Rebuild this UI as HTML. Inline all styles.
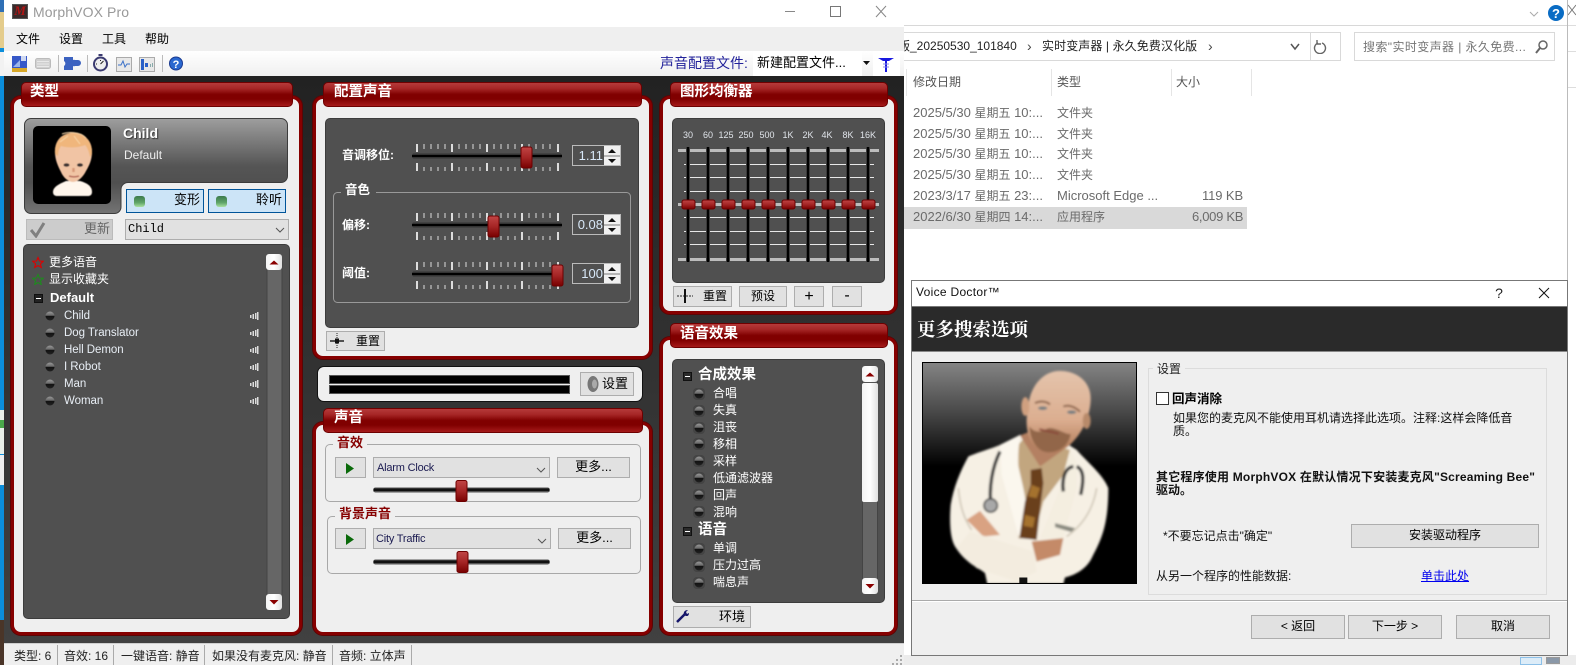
<!DOCTYPE html>
<html><head><meta charset="utf-8"><title>MorphVOX Pro</title>
<style>
html,body{margin:0;padding:0}
body{width:1576px;height:665px;overflow:hidden;position:relative;background:#fff;font:12px/16px "Liberation Sans","WenQuanYi Zen Hei","Noto Sans CJK SC",sans-serif;color:#000}
.a{position:absolute}
.t{position:absolute;white-space:nowrap;line-height:16px;font-size:12px}
.w{color:#fff}
.p{position:absolute;box-sizing:border-box;background:#efefef;border:3px solid #860000;border-radius:10px;box-shadow:0 0 0 1px #5a0505}
.h{position:absolute;box-sizing:border-box;height:25px;border:1px solid #6e0000;border-radius:5px;background:linear-gradient(#b53a3a 0,#a52525 25%,#800000 50%,#800000 70%,#a51a1a 100%);color:#fff;font-weight:bold;font-size:14.5px;line-height:16px;padding-top:0}
.h span{position:absolute;top:1px}
.d{position:absolute;box-sizing:border-box;background:#505050;border:1px solid #3c3c3c;border-radius:5px}
.b{position:absolute;box-sizing:border-box;background:#e1e1e1;border:1px solid #adadad;text-align:center;line-height:19px;white-space:nowrap}
.g{position:absolute;box-sizing:border-box;border:1px solid #a8a8a8;border-radius:5px}
.r{color:#6b6b6b;font-size:13px}
.r i{font-style:normal;font-size:12px}
.n{font-size:11.5px;letter-spacing:-.05px;color:#e8eef5}
</style></head><body>

<!-- desktop strip -->
<div class="a" style="left:0;top:0;width:4px;height:665px;background:#0b8edb"></div>
<div class="a" style="left:0;top:0;width:4px;height:30px;background:#2f6fb5"></div>
<div class="a" style="left:0;top:12px;width:4px;height:36px;background:#e4cc8c"></div>
<div class="a" style="left:0;top:52px;width:4px;height:24px;background:#f2f2f2"></div>
<div class="a" style="left:0;top:410px;width:4px;height:44px;background:#e8efe8"></div>
<div class="a" style="left:0;top:420px;width:4px;height:8px;background:#4aa84a"></div>
<div class="a" style="left:0;top:455px;width:4px;height:30px;background:#eee"></div>
<div class="a" style="left:0;top:620px;width:4px;height:45px;background:#4a3528"></div>

<!-- explorer window -->
<div class="a" style="left:904px;top:0;width:663px;height:665px;background:#fff"></div>
<div class="a" style="left:904px;top:25px;width:663px;height:1px;background:#d8d8d8"></div>
<div class="a" style="left:904px;top:32px;width:437px;height:29px;box-sizing:border-box;border:1px solid #d9d9d9;border-left:0"></div>
<div class="a" style="left:1310px;top:32px;width:1px;height:29px;background:#d9d9d9"></div>
<div class="a" style="left:1354px;top:32px;width:201px;height:29px;box-sizing:border-box;border:1px solid #d9d9d9"></div>
<div class="t" style="left:898px;top:38px;font-size:12px;color:#222">版_20250530_101840</div>
<div class="t" style="left:1027px;top:38px;color:#444;font-size:14px">›</div>
<div class="t" style="left:1042px;top:38px;color:#222;letter-spacing:.1px">实时变声器 | 永久免费汉化版</div>
<div class="t" style="left:1208px;top:38px;color:#444;font-size:14px">›</div>
<svg class="a" style="left:1290px;top:40px" width="40" height="14"><path d="M1 4l4 5 4-5" fill="none" stroke="#555" stroke-width="1.5"/><path d="M28 3a5.5 5.5 0 1 0 4 0M27 0v4h4" fill="none" stroke="#666" stroke-width="1.4"/></svg>
<div class="t" style="left:1363px;top:39px;color:#777;letter-spacing:.4px">搜索"实时变声器 | 永久免费...</div>
<svg class="a" style="left:1534px;top:39px" width="15" height="15"><circle cx="9" cy="6" r="4" fill="none" stroke="#666" stroke-width="1.5"/><path d="M6 9l-4 5" stroke="#666" stroke-width="2"/></svg>
<svg class="a" style="left:1528px;top:2px" width="48" height="22"><path d="M2 10l4 4 4-4" fill="none" stroke="#aaa" stroke-width="1"/><circle cx="28" cy="11" r="8" fill="#0a6cc4"/><text x="28" y="16" font-size="13" font-weight="bold" fill="#fff" text-anchor="middle" font-family="Liberation Sans">?</text><path d="M40 3l8 10M48 3l-8 10" stroke="#777"/></svg>
<div class="a" style="left:906px;top:69px;width:1px;height:27px;background:#e5e5e5"></div>
<div class="a" style="left:1051px;top:69px;width:1px;height:27px;background:#e5e5e5"></div>
<div class="a" style="left:1171px;top:69px;width:1px;height:27px;background:#e5e5e5"></div>
<div class="a" style="left:1251px;top:69px;width:1px;height:27px;background:#e5e5e5"></div>
<div class="t" style="left:913px;top:74px;color:#555">修改日期</div>
<div class="t" style="left:1057px;top:74px;color:#555">类型</div>
<div class="t" style="left:1176px;top:74px;color:#555">大小</div>
<div class="a" style="left:904px;top:207px;width:343px;height:22px;background:#d9d9d9"></div>
<div class="t r" style="left:913px;top:105px">2025/5/30 <i>星期五</i> 10:...</div>
<div class="t r" style="left:913px;top:126px">2025/5/30 <i>星期五</i> 10:...</div>
<div class="t r" style="left:913px;top:146px">2025/5/30 <i>星期五</i> 10:...</div>
<div class="t r" style="left:913px;top:167px">2025/5/30 <i>星期五</i> 10:...</div>
<div class="t r" style="left:913px;top:188px">2023/3/17 <i>星期五</i> 23:...</div>
<div class="t r" style="left:913px;top:209px">2022/6/30 <i>星期四</i> 14:...</div>
<div class="t r" style="left:1057px;top:105px"><i>文件夹</i></div>
<div class="t r" style="left:1057px;top:126px"><i>文件夹</i></div>
<div class="t r" style="left:1057px;top:146px"><i>文件夹</i></div>
<div class="t r" style="left:1057px;top:167px"><i>文件夹</i></div>
<div class="t r" style="left:1057px;top:188px">Microsoft Edge ...</div>
<div class="t r" style="left:1057px;top:209px"><i>应用程序</i></div>
<div class="t r" style="left:1202px;top:188px;letter-spacing:-.1px">119 KB</div>
<div class="t r" style="left:1192px;top:209px;letter-spacing:-.3px">6,009 KB</div>
<div class="a" style="left:1567px;top:0;width:1px;height:280px;background:#bbb"></div>
<div class="a" style="left:1568px;top:25px;width:8px;height:1px;background:#ddd"></div>
<div class="a" style="left:1568px;top:51px;width:8px;height:1px;background:#ddd"></div>
<div class="a" style="left:1568px;top:87px;width:8px;height:1px;background:#ddd"></div>
<div class="a" style="left:904px;top:655px;width:672px;height:10px;background:#ececec"></div>
<div class="a" style="left:1520px;top:657px;width:22px;height:8px;box-sizing:border-box;border:1px solid #8cc0e8;background:#dcecf8"></div>
<div class="a" style="left:1546px;top:657px;width:14px;height:7px;background:#8a98a8;border:1px solid #999;box-sizing:border-box"></div>

<!-- Voice Doctor dialog -->
<div class="a" style="left:911px;top:280px;width:657px;height:376px;box-sizing:border-box;background:#efefef;border:1px solid #777"></div>
<div class="a" style="left:912px;top:281px;width:655px;height:25px;background:#fff"></div>
<div class="t" style="left:916px;top:284px;font-size:12px;letter-spacing:.3px;color:#111">Voice Doctor™</div>
<div class="a" style="left:912px;top:306px;width:655px;height:46px;box-sizing:border-box;background:#2a2a2a;border-top:1px solid #777;border-bottom:1px solid #888"></div>
<div class="t" style="left:917px;top:319px;font:bold 18.5px/20px 'Noto Serif CJK SC','Liberation Serif',serif;color:#fff">更多搜索选项</div>
<svg class="a" style="left:1490px;top:284px" width="64" height="18"><text x="9" y="14" font-size="14" text-anchor="middle" font-family="Liberation Sans" fill="#222">?</text><path d="M49 4l10 10M59 4L49 14" stroke="#111" stroke-width="1"/></svg>

<!-- doctor picture -->
<svg class="a" style="left:922px;top:362px;outline:1px solid #000;outline-offset:-1px" width="215" height="222" viewBox="66 262 645 665">
<defs>
<linearGradient id="dbg" x1="0" y1="0" x2="0" y2="1"><stop offset="0" stop-color="#858585"/><stop offset=".22" stop-color="#4a4a4a"/><stop offset=".47" stop-color="#000"/><stop offset="1" stop-color="#000"/></linearGradient>
<linearGradient id="skin" x1="0" y1="0" x2="0" y2="1"><stop offset="0" stop-color="#e4c4ac"/><stop offset=".6" stop-color="#dcae90"/><stop offset="1" stop-color="#b07a58"/></linearGradient>
<filter id="bl"><feGaussianBlur stdDeviation="3.5"/></filter>
<filter id="bl2"><feGaussianBlur stdDeviation="7"/></filter>
</defs>
<rect x="66" y="262" width="645" height="665" fill="url(#dbg)"/>
<g filter="url(#bl)">
<path d="M360 480C320 510 250 525 205 545 180 590 160 640 152 690 148 740 150 790 165 815 200 870 240 880 255 895L262 927H490L495 908C530 900 560 880 575 850 600 800 625 760 625 640 610 600 560 560 530 525L490 500Z" fill="#f6f0e4"/>
<path d="M355 510L372 490 510 525 490 600 430 680 400 795 355 790Z" fill="#c2a67f"/>
<path d="M360 480L300 510 305 600 358 790 400 800 370 640 352 560Z" fill="#fbf7ee"/>
<path d="M510 525L480 640 420 790 490 790 530 640 530 560Z" fill="#f4eee0"/>
<path d="M392 585L425 580 430 625 422 690 410 795 358 790 375 680 392 630Z" fill="#6a3f1e"/>
<path d="M395 630l25 10-10 30-25-5zM375 720l30 8-6 30-28-5z" fill="#a5722f"/>
<path d="M360 482L420 575 490 525 450 505 390 470Z" fill="#b48062"/>
<path d="M480 288C530 288 572 320 572 370 572 420 550 470 515 505 490 535 440 540 410 520 385 500 372 450 385 400 385 350 420 288 480 288Z" fill="url(#skin)"/>
<ellipse cx="376" cy="395" rx="12" ry="28" fill="#d0a080"/>
<ellipse cx="560" cy="438" rx="12" ry="24" fill="#b88a6a"/>
<path d="M388 455C400 468 412 478 440 462 462 452 490 478 512 478 505 518 470 535 440 532 412 528 390 495 388 455Z" fill="#92664a"/>
<path d="M418 463c20 6 40 8 58 14" stroke="#8a4a3a" stroke-width="6" fill="none"/>
<path d="M405 385c15-8 35-6 45 4M490 395c15-6 35 0 50 16" stroke="#8a6248" stroke-width="6" fill="none"/>
<ellipse cx="428" cy="400" rx="14" ry="5" fill="#707c80"/><ellipse cx="515" cy="412" rx="14" ry="5" fill="#707c80"/>
<path d="M300 530C275 580 268 640 272 680M530 575c22 10 22 40 12 85M490 650c-4-30 0-70 30-75" stroke="#333" stroke-width="10" fill="none"/>
<circle cx="272" cy="692" r="20" fill="#a8a8a8" stroke="#444" stroke-width="5"/>
<path d="M200 735L240 708 300 780 250 785Z" fill="#d9a282"/>
<path d="M395 800L490 790 480 840 410 860Z" fill="#c48a68"/>
<path d="M210 770l190 60 10 60-60 30-120-40-60-60Z" fill="#f3ecdf"/>
<path d="M465 745l60 15-10 12-50-15z" fill="#8a8a80"/>
<path d="M175 640c5 50 15 90 40 125M590 640c-10 60-40 110-90 145" stroke="#d0c8b8" stroke-width="5" fill="none"/>
</g>
<rect x="358" y="908" width="24" height="20" fill="#111"/>
</svg>

<!-- settings group -->
<div class="a" style="left:1148px;top:368px;width:399px;height:227px;box-sizing:border-box;border:1px solid #dcdcdc"></div>
<div class="t" style="left:1153px;top:361px;padding:0 4px;background:#efefef;color:#222">设置</div>
<div class="a" style="left:1156px;top:392px;width:13px;height:13px;box-sizing:border-box;border:1px solid #333;background:#fff"></div>
<div class="t" style="left:1172px;top:391px;font-weight:bold;font-size:12.5px">回声消除</div>
<div class="t" style="left:1173px;top:410px;color:#111">如果您的麦克风不能使用耳机请选择此选项。注释:这样会降低音</div>
<div class="t" style="left:1173px;top:423px;color:#111">质。</div>
<div class="t" style="left:1156px;top:469px;font-weight:bold;color:#111;letter-spacing:.2px">其它程序使用 MorphVOX 在默认情况下安装麦克风"Screaming Bee"</div>
<div class="t" style="left:1156px;top:482px;font-weight:bold;color:#111">驱动。</div>
<div class="t" style="left:1163px;top:528px;color:#111">*不要忘记点击"确定"</div>
<div class="b" style="left:1351px;top:524px;width:188px;height:24px;line-height:21px">安装驱动程序</div>
<div class="t" style="left:1156px;top:576px;margin-top:-8px;color:#111">从另一个程序的性能数据:</div>
<div class="t" style="left:1421px;top:568px;color:#00e;text-decoration:underline">单击此处</div>
<div class="a" style="left:912px;top:600px;width:655px;height:1px;background:#aaa"></div>
<div class="a" style="left:912px;top:601px;width:655px;height:1px;background:#fff"></div>
<div class="b" style="left:1251px;top:615px;width:94px;height:24px;line-height:21px">&lt; 返回</div>
<div class="b" style="left:1348px;top:615px;width:94px;height:24px;line-height:21px">下一步 &gt;</div>
<div class="b" style="left:1456px;top:615px;width:94px;height:24px;line-height:21px">取消</div>

<!-- MorphVOX window -->
<div class="a" style="left:4px;top:0;width:900px;height:665px;background:#efefef"></div>
<div class="a" style="left:4px;top:0;width:900px;height:27px;background:#fff"></div>
<div class="a" style="left:12px;top:4px;width:16px;height:15px;background:#3a2a2a;border:1px solid #555;box-sizing:border-box"></div>
<div class="t" style="left:13px;top:3px;width:14px;text-align:center;font:italic bold 13px/16px 'Liberation Serif',serif;color:#b01515">M</div>
<div class="t" style="left:33px;top:4px;font-size:14px;color:#999;letter-spacing:.1px">MorphVOX Pro</div>
<svg class="a" style="left:780px;top:2px" width="120" height="20"><path d="M5 9.5h10" stroke="#888"/><rect x="50.5" y="4.5" width="10" height="10" fill="none" stroke="#777"/><path d="M96 4l10 11M106 4L96 15" stroke="#888"/></svg>
<div class="t" style="left:16px;top:31px">文件</div>
<div class="t" style="left:59px;top:31px">设置</div>
<div class="t" style="left:102px;top:31px">工具</div>
<div class="t" style="left:145px;top:31px">帮助</div>
<div class="a" style="left:4px;top:51px;width:900px;height:25px;background:linear-gradient(#fff,#f0f0f0)"></div>
<svg class="a" style="left:4px;top:51px" width="190" height="25">
<rect x="8" y="5" width="15" height="12" fill="#3658c8"/><rect x="17" y="5" width="5" height="5" fill="#cfd8f0"/><path d="M9 16l7-7v7z" fill="#9bb5ea"/><rect x="8" y="17" width="15" height="4" fill="#d8a828"/>
<rect x="31.500" y="7.500" width="15" height="10" rx="2" fill="#d0d0d0" stroke="#bbb"/><path d="M33 10.500h12M33 13h12M33 15.500h12" stroke="#e8e8e8"/>
<rect x="54" y="4" width="1" height="17" fill="#bbb"/>
<path d="M60 6h9v3a2 2 0 0 1 2 0h3a3 3 0 0 1 0 6h-3a2 2 0 0 1-2 0v4H60v-4a3 3 0 0 0 0-5z" fill="#3c62c0"/>
<rect x="83" y="4" width="1" height="17" fill="#bbb"/>
<circle cx="96.500" cy="13" r="6.500" fill="#eee" stroke="#3a3a70" stroke-width="2"/><rect x="94.500" y="3" width="4" height="2" fill="#3a3a70"/><path d="M96.500 13l3-3M96.500 9v1M92 13h1" stroke="#222"/>
<rect x="112.500" y="6.500" width="15" height="14" fill="#e8e8e8" stroke="#aaa"/><path d="M114 14l3 0 2-4 2 6 2-3h3" fill="none" stroke="#3a70c8"/>
<rect x="135.500" y="6.500" width="15" height="14" fill="#e8e8e8" stroke="#aaa"/><path d="M137 8h3v11h-3zM141 12h3v4h-3z" fill="#2a60c8"/><path d="M146 13h1v3h-1zM148 12h1v4h-1z" fill="#8aa"/>
<rect x="158" y="4" width="1" height="17" fill="#bbb"/>
<circle cx="172" cy="12.500" r="6.500" fill="#2a68d0" stroke="#1a3a90"/><text x="172" y="17" font-size="11" font-weight="bold" fill="#fff" text-anchor="middle" font-family="Liberation Sans">?</text>
</svg>
<div class="t" style="left:660px;top:55px;font-size:14px;color:#22229a">声音配置文件:</div>
<div class="a" style="left:753px;top:51px;width:109px;height:25px;background:#fff"></div>
<div class="t" style="left:757px;top:55px;font-size:13px">新建配置文件...</div>
<div class="a" style="left:873px;top:51px;width:27px;height:25px;background:#fff"></div>
<svg class="a" style="left:862px;top:56px" width="36" height="16"><path d="M1 5h7l-3.500 4z" fill="#111"/><path d="M16 2h16l-5 3h-2v11h-2V5h-2z" fill="#1818e0"/><path d="M21 8h6M21 11h6" stroke="#8888e8"/></svg>

<div class="a" style="left:4px;top:76px;width:900px;height:567px;background:linear-gradient(#222,#414141)"></div>
<div class="a" style="left:4px;top:643px;width:900px;height:1px;background:#cfcfcf"></div>

<!-- panels -->
<div class="p" style="left:11px;top:96px;width:291px;height:539px"></div>
<div class="h" style="left:21px;top:82px;width:272px"><span style="left:8px">类型</span></div>
<div class="p" style="left:313px;top:96px;width:339px;height:263px"></div>
<div class="h" style="left:323px;top:82px;width:319px"><span style="left:10px">配置声音</span></div>
<div class="p" style="left:660px;top:96px;width:237px;height:218px"></div>
<div class="h" style="left:670px;top:82px;width:218px"><span style="left:9px">图形均衡器</span></div>
<div class="a" style="left:317px;top:366px;width:326px;height:36px;box-sizing:border-box;background:#efefef;border:1px solid #111;border-radius:7px"></div>
<div class="p" style="left:313px;top:422px;width:339px;height:213px"></div>
<div class="h" style="left:323px;top:408px;width:320px"><span style="left:10px">声音</span></div>
<div class="p" style="left:660px;top:337px;width:237px;height:298px"></div>
<div class="h" style="left:670px;top:323px;width:218px"><span style="left:9px;top:2px">语音效果</span></div>

<!-- dark panes -->
<div class="d" style="left:23px;top:244px;width:267px;height:375px"></div>
<div class="d" style="left:325px;top:118px;width:314px;height:210px"></div>
<div class="d" style="left:672px;top:118px;width:213px;height:165px"></div>
<div class="d" style="left:672px;top:359px;width:213px;height:244px"></div>

<!-- profile box -->
<svg class="a" style="left:0;top:0" width="310" height="260">
<defs><linearGradient id="pg" x1="0" y1="0" x2="0" y2="1"><stop offset="0" stop-color="#9e9e9e"/><stop offset=".5" stop-color="#555"/><stop offset=".68" stop-color="#505050"/><stop offset="1" stop-color="#747474"/></linearGradient>
<filter id="cb"><feGaussianBlur stdDeviation=".6"/></filter></defs>
<path d="M31 118.500H281a6.500 6.500 0 0 1 6.500 6.500V176a6.500 6.500 0 0 1-6.500 6.500H128a7 7 0 0 0-7 7V207a6.500 6.500 0 0 1-6.500 6.500H31a6.500 6.500 0 0 1-6.500-6.500V125a6.500 6.500 0 0 1 6.500-6.500z" fill="url(#pg)" stroke="#3c3c3c"/>
<rect x="33" y="126" width="78" height="78" rx="5" fill="#000"/>
<g filter="url(#cb)">
<path d="M53 192c0-5 6-8 13-11h14c7 2 12 5 12 11 0 3-2 4-4 4H57c-2 0-4-1-4-4z" fill="#fff6ec"/>
<path d="M55 152c0-13 8-19 18-19s19 6 19 19c0 8-3 14-6 19-3 6-8 11-13 11s-10-5-12-10c-3-6-6-12-6-20z" fill="#f1c4a4"/>
<path d="M55 154c-1-14 8-21 18-21s20 7 19 21l-2 3c-1-6-3-10-5-12-7 3-18 3-24 1-2 3-3 6-3 10z" fill="#f0b67c"/>
<path d="M62 134c5-2 18-3 24 4M60 142l8-6M74 136l6 8" stroke="#f8d6a8" fill="none"/>
<ellipse cx="66.500" cy="165" rx="3" ry="1.800" fill="#3a3030"/><ellipse cx="80" cy="165" rx="3" ry="1.800" fill="#3a3030"/>
<path d="M69 176c3 1 7 1 10 0" stroke="#b86a5a" stroke-width="1.500" fill="none"/><path d="M73.500 168v4" stroke="#d89878" stroke-width="2.500"/>
</g>
</svg>
<div class="t w" style="left:123px;top:125px;font-weight:bold;font-size:14px;text-shadow:1px 1px 1px #333">Child</div>
<div class="t w" style="left:124px;top:147px;font-size:12px;color:#eee">Default</div>
<div class="a" style="left:126px;top:189px;width:78px;height:24px;box-sizing:border-box;background:#cce4f7;border:1px solid #005499"></div>
<div class="a" style="left:208px;top:189px;width:78px;height:24px;box-sizing:border-box;background:#cce4f7;border:1px solid #005499"></div>
<div class="a" style="left:134px;top:196px;width:11px;height:11px;border-radius:3px;background:linear-gradient(#3c7a4c,#5fa468 60%,#a8e0a0)"></div>
<div class="a" style="left:216px;top:196px;width:11px;height:11px;border-radius:3px;background:linear-gradient(#3c7a4c,#5fa468 60%,#a8e0a0)"></div>
<div class="t" style="left:174px;top:192px;font-size:13px">变形</div>
<div class="t" style="left:256px;top:192px;font-size:13px">聆听</div>
<div class="b" style="left:26px;top:219px;width:87px;height:21px;background:#ccc;border-color:#bbb"></div>
<svg class="a" style="left:30px;top:221px" width="16" height="17"><path d="M1 9l5 6L14 2" fill="none" stroke="#808080" stroke-width="3"/></svg>
<div class="t" style="left:84px;top:221px;color:#666;font-size:13px">更新</div>
<div class="b" style="left:125px;top:219px;width:164px;height:21px;background:#e1e1e1"></div>
<div class="t" style="left:128px;top:221px;font:12px/16px 'Liberation Mono',monospace">Child</div>

<!-- type list text -->
<svg class="a" style="left:32px;top:256px" width="12" height="29"><path d="M6 1.500l1.500 3.500 3.800.3-2.900 2.500.9 3.700L6 9.500l-3.300 2 .9-3.700L.7 5.300l3.800-.3z" fill="none" stroke="#d00" stroke-width="1.100"/><path d="M6 18.500l1.500 3.500 3.800.3-2.900 2.500.9 3.700L6 26.500l-3.300 2 .9-3.700L.7 22.300l3.800-.3z" fill="none" stroke="#1f8a1f" stroke-width="1.100"/></svg>
<div class="t w" style="left:49px;top:254px">更多语音</div>
<div class="t w" style="left:49px;top:271px">显示收藏夹</div>
<div class="a" style="left:34px;top:294px;width:9px;height:9px;box-sizing:border-box;background:#222;border:1px solid #111"></div>
<div class="a" style="left:36px;top:298px;width:5px;height:1px;background:#fff"></div>
<div class="t w" style="left:50px;top:290px;font-weight:bold;font-size:13px">Default</div>
<div class="t n" style="left:64px;top:308px">Child</div>
<div class="t n" style="left:64px;top:325px">Dog Translator</div>
<div class="t n" style="left:64px;top:342px">Hell Demon</div>
<div class="t n" style="left:64px;top:359px">I Robot</div>
<div class="t n" style="left:64px;top:376px">Man</div>
<div class="t n" style="left:64px;top:393px">Woman</div>

<!-- graphics overlay -->
<svg class="a" style="left:0;top:0" width="904" height="665">
<defs>
<linearGradient id="th" x1="0" y1="0" x2="0" y2="1"><stop offset="0" stop-color="#c04545"/><stop offset=".5" stop-color="#a52525"/><stop offset="1" stop-color="#780000"/></linearGradient>
<linearGradient id="ld" x1="0" y1="0" x2="0" y2="1"><stop offset="0" stop-color="#999"/><stop offset=".45" stop-color="#666"/><stop offset=".5" stop-color="#111"/><stop offset="1" stop-color="#222"/></linearGradient>
<linearGradient id="sb" x1="0" y1="0" x2="1" y2="0"><stop offset="0" stop-color="#f4f4f4"/><stop offset=".5" stop-color="#fff"/><stop offset="1" stop-color="#e0e0e0"/></linearGradient>
<g id="tk" stroke="#dcdcdc" fill="none">
<path stroke-width="2" d="M0-12v8M35-12v8M70-12v8M105-12v8M141-12v8M0 7v8M35 7v8M70 7v8M105 7v8M141 7v8"/>
<path stroke-width="1" d="M7-12v5M14-12v5M21-12v5M28-12v5M42-12v5M49-12v5M56-12v5M63-12v5M77-12v5M84-12v5M91-12v5M98-12v5M112-12v5M119-12v5M126-12v5M133-12v5M7 11v4M14 11v4M21 11v4M28 11v4M42 11v4M49 11v4M56 11v4M63 11v4M77 11v4M84 11v4M91 11v4M98 11v4M112 11v4M119 11v4M126 11v4M133 11v4"/>
</g>
<g id="led"><circle r="4.500" fill="url(#ld)"/></g>
<g id="led2"><rect x="-6" y="-6" width="12" height="12" rx="4" fill="#444"/><circle r="4.500" fill="url(#ld)"/></g>
<g id="bar" fill="#ddd"><rect x="0" y="-1" width="1.500" height="3"/><rect x="2.500" y="-2" width="1.500" height="5"/><rect x="5" y="-3" width="1.500" height="6" /><rect x="7" y="-4" width="1.500" height="8"/></g>
<g id="th1"><rect x="-5.500" y="-10.500" width="11" height="21" rx="2" fill="url(#th)" stroke="#6e0000"/></g>
<g id="eqt"><rect x="-6.500" y="-4.500" width="13" height="9" rx="2" fill="url(#th)" stroke="#6e0000"/></g>
<g id="up"><rect width="16" height="16" rx="3" fill="url(#sb)"/><path d="M3.500 10.500h9L8 6.500z" fill="#8a0000"/></g>
<g id="dn"><rect width="16" height="16" rx="3" fill="url(#sb)"/><path d="M3.500 6h9L8 10.500z" fill="#8a0000"/></g>
<g id="spn"><rect x="0" y="0" width="16" height="19" fill="#f0f0f0"/><rect x="0" y="9" width="16" height="2" fill="#b5b5b5"/><path d="M4 7h8L8 3zM4 13h8l-4 4z" fill="#111"/></g>
<g id="tr"><rect x="0" y="-2.500" width="150" height="5" rx="2" fill="#333"/><rect x="0" y="-1" width="150" height="2" fill="#000"/></g>
<g id="tr2"><rect x="0" y="-2.500" width="177" height="5" rx="2.500" fill="#555"/><rect x="1" y="-1.500" width="175" height="2.500" fill="#111"/></g>
</defs>

<!-- type list graphics -->
<rect x="267" y="262" width="15" height="340" fill="#666" stroke="#444"/>
<use href="#up" x="266" y="254"/><use href="#dn" x="266" y="594"/>
<use href="#led" x="50" y="316"/><use href="#led" x="50" y="333"/><use href="#led" x="50" y="350"/><use href="#led" x="50" y="367"/><use href="#led" x="50" y="384"/><use href="#led" x="50" y="401"/>
<use href="#bar" x="250" y="316"/><use href="#bar" x="250" y="333"/><use href="#bar" x="250" y="350"/><use href="#bar" x="250" y="367"/><use href="#bar" x="250" y="384"/><use href="#bar" x="250" y="401"/>
<path d="M276 228l4 4 4-4" stroke="#555" fill="none"/>

<!-- voice config -->
<use href="#tk" x="417" y="156"/><use href="#tk" x="417" y="225"/><use href="#tk" x="417" y="274"/>
<use href="#tr" x="412" y="156"/><use href="#tr" x="412" y="225"/><use href="#tr" x="412" y="274"/>
<rect x="333.500" y="192.500" width="297" height="110" rx="4" fill="none" stroke="#999"/>
<rect x="341" y="186" width="35" height="12" fill="#505050"/>
<use href="#th1" x="526.500" y="157.500"/><use href="#th1" x="493.500" y="226.500"/><use href="#th1" x="557.500" y="275.500"/>
<rect x="572.500" y="145.500" width="48" height="20" fill="#505050" stroke="#bbb"/><rect x="572.500" y="214.500" width="48" height="20" fill="#505050" stroke="#bbb"/><rect x="572.500" y="263.500" width="48" height="20" fill="#505050" stroke="#bbb"/>
<use href="#spn" x="604" y="146"/><use href="#spn" x="604" y="215"/><use href="#spn" x="604" y="264"/>

<!-- EQ -->
<g stroke="#bcbcbc" stroke-width="3"><path d="M678 150.500h201M678 204.500h201M678 259.500h201"/></g>
<g stroke="#e8e8e8" stroke-width="1"><path d="M684 164.500h190M684 177.500h190M684 191.500h190M684 217.500h190M684 231.500h190M684 244.500h190"/></g>
<g stroke="#3a3a3a" stroke-width="4"><path d="M688 147v115M708 147v115M728 147v115M748 147v115M768 147v115M788 147v115M808 147v115M828 147v115M848 147v115M868 147v115"/></g>
<g stroke="#000" stroke-width="2"><path d="M688 147v115M708 147v115M728 147v115M748 147v115M768 147v115M788 147v115M808 147v115M828 147v115M848 147v115M868 147v115"/></g>
<use href="#eqt" x="688.500" y="204.500"/><use href="#eqt" x="708.500" y="204.500"/><use href="#eqt" x="728.500" y="204.500"/><use href="#eqt" x="748.500" y="204.500"/><use href="#eqt" x="768.500" y="204.500"/><use href="#eqt" x="788.500" y="204.500"/><use href="#eqt" x="808.500" y="204.500"/><use href="#eqt" x="828.500" y="204.500"/><use href="#eqt" x="848.500" y="204.500"/><use href="#eqt" x="868.500" y="204.500"/>

<!-- meters -->
<rect x="329.500" y="375.500" width="240" height="8" fill="#000" stroke="#555"/><rect x="329.500" y="385.500" width="240" height="8" fill="#000" stroke="#555"/>

<!-- effects list -->
<rect x="862.500" y="382" width="15" height="197" fill="#666" stroke="#444"/>
<rect x="862" y="383" width="16" height="119" rx="2" fill="url(#sb)"/>
<use href="#up" x="862" y="366"/><use href="#dn" x="862" y="578"/>
<use href="#led2" x="699" y="394"/><use href="#led2" x="699" y="411"/><use href="#led2" x="699" y="428"/><use href="#led2" x="699" y="444"/><use href="#led2" x="699" y="461"/><use href="#led2" x="699" y="478"/><use href="#led2" x="699" y="495"/><use href="#led2" x="699" y="512"/><use href="#led2" x="699" y="549"/><use href="#led2" x="699" y="566"/><use href="#led2" x="699" y="583"/>
<rect x="683.500" y="372.500" width="8" height="8" fill="#2a2a2a" stroke="#111"/><path d="M685 376.500h5" stroke="#fff"/>
<rect x="683.500" y="527.500" width="8" height="8" fill="#2a2a2a" stroke="#111"/><path d="M685 531.500h5" stroke="#fff"/>
</svg>

<!-- voice config text -->
<div class="t w" style="left:342px;top:147px;font-weight:bold;font-size:12px">音调移位:</div>
<div class="t w" style="left:345px;top:182px;font-weight:bold;font-size:12.500px">音色</div>
<div class="t w" style="left:342px;top:217px;font-weight:bold">偏移:</div>
<div class="t w" style="left:342px;top:265px;font-weight:bold">阈值:</div>
<div class="t" style="left:569px;top:148px;width:34px;text-align:right;color:#d8e8f8;font-size:13px">1.11</div>
<div class="t" style="left:569px;top:217px;width:34px;text-align:right;color:#d8e8f8;font-size:13px">0.08</div>
<div class="t" style="left:569px;top:266px;width:34px;text-align:right;color:#d8e8f8;font-size:13px">100</div>
<div class="b" style="left:326px;top:331px;width:59px;height:20px;text-align:left;padding-left:29px;line-height:18px">重置</div>
<svg class="a" style="left:330px;top:333px" width="16" height="16"><path d="M0 8h14" stroke="#222" stroke-width="1.500"/><path d="M7 0v16" stroke="#222" stroke-dasharray="1 1"/><rect x="5" y="5.500" width="4" height="5" fill="#111"/></svg>

<!-- EQ text -->
<div class="t" style="left:668px;top:127px;width:40px;text-align:center;font-size:9px;color:#e0e4ea">30</div>
<div class="t" style="left:688px;top:127px;width:40px;text-align:center;font-size:9px;color:#e0e4ea">60</div>
<div class="t" style="left:706px;top:127px;width:40px;text-align:center;font-size:9px;color:#e0e4ea">125</div>
<div class="t" style="left:726px;top:127px;width:40px;text-align:center;font-size:9px;color:#e0e4ea">250</div>
<div class="t" style="left:747px;top:127px;width:40px;text-align:center;font-size:9px;color:#e0e4ea">500</div>
<div class="t" style="left:768px;top:127px;width:40px;text-align:center;font-size:9px;color:#e0e4ea">1K</div>
<div class="t" style="left:788px;top:127px;width:40px;text-align:center;font-size:9px;color:#e0e4ea">2K</div>
<div class="t" style="left:807px;top:127px;width:40px;text-align:center;font-size:9px;color:#e0e4ea">4K</div>
<div class="t" style="left:828px;top:127px;width:40px;text-align:center;font-size:9px;color:#e0e4ea">8K</div>
<div class="t" style="left:848px;top:127px;width:40px;text-align:center;font-size:9px;color:#e0e4ea">16K</div>
<div class="b" style="left:673px;top:286px;width:59px;height:21px;text-align:left;padding-left:29px;line-height:18px">重置</div>
<svg class="a" style="left:676px;top:288px" width="18" height="16"><path d="M1 8h16" stroke="#222" stroke-dasharray="2 1"/><path d="M9 1v14" stroke="#111" stroke-width="2"/></svg>
<div class="b" style="left:739px;top:286px;width:48px;height:21px;line-height:18px">预设</div>
<div class="b" style="left:794px;top:286px;width:30px;height:21px;font-size:16px;line-height:19px">+</div>
<div class="b" style="left:832px;top:286px;width:30px;height:21px;font-size:16px;line-height:17px">-</div>

<!-- effects text -->
<div class="t w" style="left:698px;top:367px;font-size:14.500px;font-weight:bold">合成效果</div>
<div class="t w" style="left:713px;top:385px">合唱</div>
<div class="t w" style="left:713px;top:402px">失真</div>
<div class="t w" style="left:713px;top:419px">沮丧</div>
<div class="t w" style="left:713px;top:436px">移相</div>
<div class="t w" style="left:713px;top:453px">采样</div>
<div class="t w" style="left:713px;top:470px">低通滤波器</div>
<div class="t w" style="left:713px;top:487px">回声</div>
<div class="t w" style="left:713px;top:504px">混响</div>
<div class="t w" style="left:698px;top:522px;font-size:14.500px;font-weight:bold">语音</div>
<div class="t w" style="left:713px;top:540px">单调</div>
<div class="t w" style="left:713px;top:557px">压力过高</div>
<div class="t w" style="left:713px;top:574px">喘息声</div>
<div class="b" style="left:673px;top:606px;width:78px;height:22px;text-align:right;padding-right:5px;line-height:20px;font-size:13px">环境</div>
<svg class="a" style="left:675px;top:608px" width="16" height="16"><path d="M2 14l8-8" stroke="#15156a" stroke-width="2.500"/><path d="M9 7c-1-3 1-5 4-5l-2 2 1 2 2-1c0 3-2 4-5 2z" fill="#15156a"/></svg>

<!-- meter button -->
<div class="b" style="left:580px;top:372px;width:54px;height:24px;text-align:right;padding-right:5px;line-height:21px;font-size:13px">设置</div>
<svg class="a" style="left:586px;top:375px" width="14" height="18"><ellipse cx="7" cy="9" rx="5.500" ry="8" fill="#777"/><ellipse cx="8.500" cy="9" rx="2.500" ry="4.500" fill="#aaa"/></svg>

<!-- sound section -->
<div class="g" style="left:325px;top:444px;width:316px;height:58px"></div>
<div class="g" style="left:327px;top:516px;width:314px;height:58px"></div>
<div class="t" style="left:333px;top:435px;padding:0 4px;background:#efefef;color:#860000;font-weight:bold;font-size:13px">音效</div>
<div class="t" style="left:335px;top:506px;padding:0 4px;background:#efefef;color:#860000;font-weight:bold;font-size:13px">背景声音</div>
<div class="b" style="left:335px;top:457px;width:31px;height:21px"></div>
<div class="b" style="left:335px;top:528px;width:31px;height:21px"></div>
<div class="b" style="left:373px;top:457px;width:177px;height:21px"></div>
<div class="b" style="left:373px;top:528px;width:178px;height:21px"></div>
<div class="b" style="left:557px;top:457px;width:73px;height:21px;line-height:17px;font-size:13px">更多...</div>
<div class="b" style="left:558px;top:528px;width:73px;height:21px;line-height:17px;font-size:13px">更多...</div>
<div class="t" style="left:377px;top:460px;color:#1a1a50;font-size:11px;letter-spacing:-.2px">Alarm Clock</div>
<div class="t" style="left:376px;top:531px;color:#1a1a50;font-size:11px;letter-spacing:-.2px">City Traffic</div>
<svg class="a" style="left:320px;top:450px" width="250" height="130">
<path d="M26 13v11l8-5.500zM26 84v11l8-5.500z" fill="#0a6a0a"/>
<path d="M217 18l4 4 4-4M218 89l4 4 4-4" fill="none" stroke="#555"/>
<use href="#tr2" x="53" y="40"/><use href="#tr2" x="53" y="112"/>
<use href="#th1" x="141.500" y="41"/><use href="#th1" x="142.500" y="112"/>
</svg>

<!-- status bar -->
<div class="t" style="left:14px;top:648px;color:#222">类型: 6</div>
<div class="t" style="left:64px;top:648px;color:#222">音效: 16</div>
<div class="t" style="left:121px;top:648px;color:#222">一键语音: 静音</div>
<div class="t" style="left:212px;top:648px;color:#222">如果没有麦克风: 静音</div>
<div class="t" style="left:339px;top:648px;color:#222">音频: 立体声</div>
<div class="a" style="left:57px;top:645px;width:1px;height:20px;background:#aaa"></div>
<div class="a" style="left:113px;top:645px;width:1px;height:20px;background:#aaa"></div>
<div class="a" style="left:204px;top:645px;width:1px;height:20px;background:#aaa"></div>
<div class="a" style="left:332px;top:645px;width:1px;height:20px;background:#aaa"></div>
<div class="a" style="left:411px;top:645px;width:1px;height:20px;background:#aaa"></div>
<svg class="a" style="left:890px;top:653px" width="14" height="12"><path d="M10 2h2v2h-2zM6 6h2v2H6zM10 6h2v2h-2zM2 10h2v2H2zM6 10h2v2H6zM10 10h2v2h-2z" fill="#aaa"/></svg>
</body></html>
